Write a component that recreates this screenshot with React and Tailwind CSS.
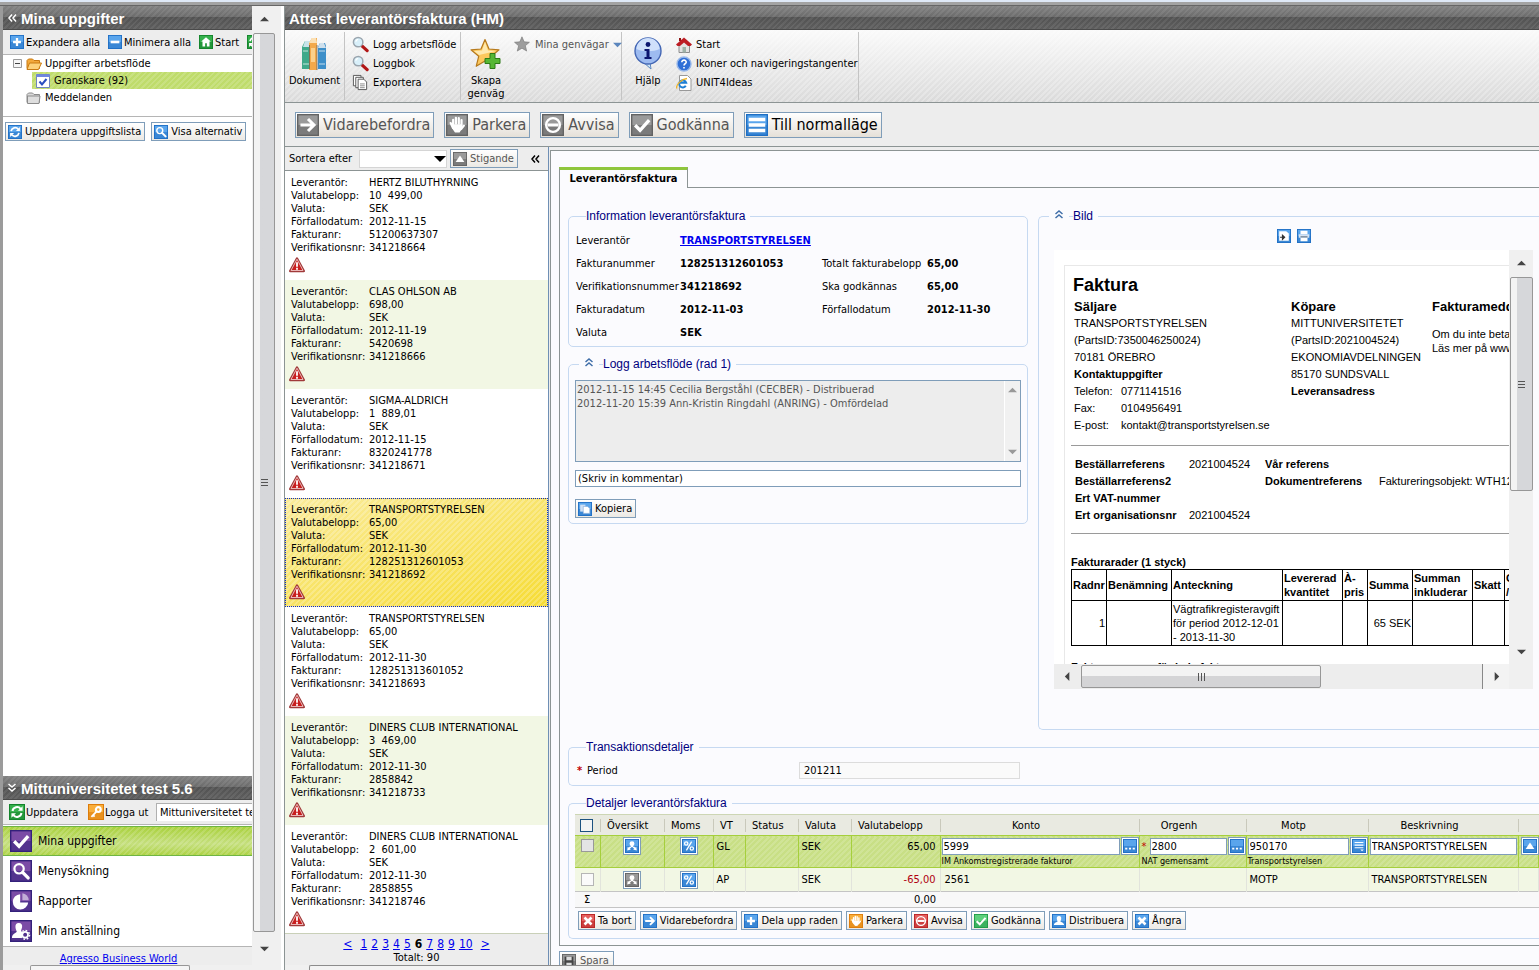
import clsx from 'clsx';

const glyphs = {
    plus: <path d="M8 3.5v9M3.5 8h9" stroke="#fff" strokeWidth="2.6" />,
    minus: <path d="M3 8h10" stroke="#fff" strokeWidth="3" />,
    home: <path d="M8 2.5L2.5 7.5h1.5V13h3v-3.5h2V13h3V7.5h1.5z" fill="#fff" />,
    refresh: (
        <g fill="none" stroke="#fff" strokeWidth="2">
            <path d="M3.5 7a4.7 4.7 0 018.2-2.2M12.5 9a4.7 4.7 0 01-8.2 2.2" />
            <path d="M13.6 2.2v4.6H9zM2.4 13.8V9.2H7z" fill="#fff" stroke="none" />
        </g>
    ),
    search: (
        <g fill="none" stroke="#fff">
            <circle cx="6.6" cy="6.4" r="3.4" strokeWidth="1.6" />
            <path d="M9.2 9l4 4" strokeWidth="2.4" strokeLinecap="round" />
        </g>
    ),
    key: (
        <g fill="none" stroke="#fff">
            <circle cx="10.3" cy="5.6" r="2.4" strokeWidth="2.2" />
            <path d="M8.4 7.6l-5 5.2M5 11l1.6 1.6" strokeWidth="1.8" />
        </g>
    ),
    arrow: <path d="M2.5 8h9M8 3.6L12.4 8 8 12.4" fill="none" stroke="#fff" strokeWidth="2.2" />,
    hand: (
        <g stroke="#fff" strokeWidth="1.6" strokeLinecap="round" fill="#fff">
            <path d="M5.2 8V4.2M7.2 7V2.8M9.3 7V3M11.3 8V4.4M13 8.4l-2 2.6M3.4 6.6L5 10" />
            <path d="M5 8h6.2v2.4L9.6 13H6.8L5 10.4z" strokeWidth="1" />
        </g>
    ),
    stop: (
        <g fill="none" stroke="#fff">
            <circle cx="8" cy="8" r="5" strokeWidth="1.7" />
            <path d="M4 8h8" strokeWidth="2.2" />
        </g>
    ),
    check: <path d="M3 8.2l3.6 3.6L13.2 4.4" fill="none" stroke="#fff" strokeWidth="2.4" />,
    cross: <path d="M4 4l8 8M12 4l-8 8" stroke="#fff" strokeWidth="3" />,
    lines: <path d="M2 4h12M2 8h12M2 12h12" stroke="#fff" strokeWidth="2.4" />,
    up: <path d="M8 4l5 7.5H3z" fill="#fff" />,
    pie: (
        <g fill="#fff">
            <path d="M7.4 3v6h5.8A5.6 5.6 0 117.4 3z" />
            <path d="M9 2.4a5 5 0 014.6 5H9z" opacity=".55" />
        </g>
    ),
    person: <path d="M8 2.4c2 0 2.8 1.5 2.5 3.4-.2 1.3-.8 2-.9 2.9.8.8 3.9 1 4.2 4H2.2c.3-3 3.4-3.2 4.2-4-.1-.9-.7-1.6-.9-2.9C5.2 3.9 6 2.4 8 2.4z" fill="#fff" />,
    personGear: (
        <g>
            <path d="M6.4 2.2c1.9 0 2.7 1.4 2.4 3.1-.2 1.2-.7 1.9-.8 2.7.5.5 1.400.8 2 1.200L8.200 13H1.400c.2-3 2.800-3.400 3.500-4.400-.1-.9-.7-1.700-.9-3C3.700 3.700 4.500 2.200 6.400 2.200z" fill="#fff" />
            <circle cx="11" cy="10.8" r="2.1" fill="none" stroke="#fff" strokeWidth="1.3" />
            <circle cx="11" cy="10.8" r="3.2" fill="none" stroke="#fff" strokeWidth="1.1" strokeDasharray="1.2 1.3" />
        </g>
    ),
    percent: (
        <g fill="none" stroke="#fff" strokeWidth="1.5">
            <circle cx="4.8" cy="5.2" r="1.9" />
            <circle cx="11.2" cy="10.8" r="1.9" />
            <path d="M11 3L5 13" />
        </g>
    ),
    split: (
        <g fill="#fff">
            <circle cx="8" cy="5.4" r="2.8" />
            <path d="M7 7.5h2l.5 2H6.5zM2.5 13l.6-4.2 3.6 3.2zM13.5 13l-.6-4.2L9.3 12z" />
            <path d="M6.5 9L4 11.500M9.500 9l2.500 2.500" stroke="#fff" strokeWidth="1.8" />
        </g>
    ),
    dots: <path d="M2.5 11h2.4M6.8 11h2.4M11.1 11h2.4" stroke="#fff" strokeWidth="2" />,
    menu: (
        <g>
            <path d="M3 4h10M3 7h10M3 10h10" stroke="#fff" strokeWidth="1.2" />
            <path d="M9.5 12h4l-2 2z" fill="#fff" />
        </g>
    ),
    copy: (
        <g>
            <path d="M2.5 3h6v8h-6z" fill="#cfe0f4" />
            <path d="M6 5h5l2.5 2.5V13H6z" fill="#fff" stroke="#7fa6d6" strokeWidth=".7" />
        </g>
    ),
    fit: (
        <g>
            <path d="M2.5 2.5h8L13.500 5v8.500h-11z" fill="#fff" />
            <path d="M3.500 9.500h5M6.200 7L8.800 9.500 6.200 12z" fill="#333" stroke="#333" strokeWidth="1.200" />
        </g>
    ),
    print: (
        <g>
            <path d="M4 2h8v4H4zM4 9.5h8V14H4z" fill="#fff" />
            <path d="M2 6h12v4H2z" fill="#d5e3f3" />
            <path d="M4 9h8" stroke="#456" />
        </g>
    ),
    disk: (
        <g>
            <path d="M3 3h10v10H3z" fill="#444" />
            <path d="M5 3h6v4H5zM5 10h6v3H5z" fill="#ddd" />
        </g>
    ),
};

const tileColors = {
    blue: ['#5aa5ec', '#1f6fc4'],
    green: ['#35b04c', '#14832c'],
    lime: ['#5ed07c', '#1f9a47'],
    orange: ['#f9ae3a', '#dd7c0a'],
    red: ['#e4605f', '#b92324'],
    gray: ['#9a9a9a', '#636363'],
    purple: ['#7b4ba6', '#33207a'],
};

function Tile({ glyph, color = 'blue', className = 'size-[14px]' }) {
    const [top, bottom] = tileColors[color];
    return (
        <svg viewBox="0 0 16 16" className={clsx('shrink-0', className)} aria-hidden="true">
            <path d="M0 0h16v16H0z" fill={bottom} />
            <path d="M1 1h14v7H1z" fill={top} />
            <path d="M1 8h14v7H1z" fill={top} opacity=".45" />
            {glyphs[glyph]}
        </svg>
    );
}

function Chevrons({ dir = 'left', className }) {
    const paths = {
        left: 'M5 1.5L2 5l3 3.500M9 1.500L6 5l3 3.500',
        up: 'M1.5 5L5 2l3.500 3M1.500 9L5 6l3.500 3',
        down: 'M1.5 1L5 4l3.500-3M1.500 5L5 8l3.500-3',
    };
    return (
        <svg viewBox="0 0 10 10" className={clsx('size-[10px] shrink-0', className)} fill="none" stroke="currentColor" strokeWidth="1.5" aria-hidden="true">
            <path d={paths[dir]} />
        </svg>
    );
}

function Caret({ dir, className = 'text-[#444]' }) {
    const paths = { up: 'M0 7l5-5 5 5z', down: 'M0 3l5 5 5-5z', left: 'M7 0L2 5l5 5z', right: 'M3 0l5 5-5 5z' };
    return (
        <svg viewBox="0 0 10 10" className={clsx('size-[9px] shrink-0', className)} fill="currentColor" aria-hidden="true">
            <path d={paths[dir]} />
        </svg>
    );
}

function Warning() {
    return (
        <svg viewBox="0 0 16 16" className="size-[16px]" role="img" aria-label="Varning">
            <path d="M8 1.5L14.800 14H1.200z" fill="#a03a3a" stroke="#a03a3a" strokeWidth="2.400" strokeLinejoin="round" />
            <path d="M8 2.200L14 13.500H2z" fill="#c81e1e" stroke="#eab5b5" strokeWidth="1" strokeLinejoin="round" />
            <path d="M8 5.200v4.600M8 10.800v1.900" stroke="#fff" strokeWidth="1.800" />
        </svg>
    );
}

function Folder({ open }) {
    return (
        <svg viewBox="0 0 16 14" className="h-[14px] w-[16px] shrink-0" aria-hidden="true">
            <path
                d="M1 11.5V3.500L2.500 2h4L8 3.500h5.500v8z"
                fill={open ? '#f3a93a' : '#d9d9d9'}
                stroke={open ? '#c97a12' : '#8b8b8b'}
                strokeLinejoin="round"
            />
            {open ? (
                <path d="M3.500 6H15.500l-3 6.500H1z" fill="#fdd27a" stroke="#c97a12" strokeLinejoin="round" />
            ) : (
                <path d="M1.500 5H14l-1 7.500H1.500z" fill="#dedede" stroke="#8b8b8b" strokeLinejoin="round" />
            )}
        </svg>
    );
}

function MagnifierIcon() {
    return (
        <svg viewBox="0 0 18 18" className="size-[17px] shrink-0" aria-hidden="true">
            <path d="M10.500 10.500l5.500 5" stroke="#b11616" strokeWidth="3.400" strokeLinecap="round" />
            <circle cx="6.500" cy="6.500" r="5" fill="#d9f0fa" stroke="#9aa5ae" strokeWidth="1.600" />
            <path d="M4 6a3 3 0 012.500-2.500" stroke="#fff" strokeWidth="1.400" fill="none" />
        </svg>
    );
}

function PagesIcon() {
    return (
        <svg viewBox="0 0 18 18" className="size-[17px] shrink-0" fill="#fff" stroke="#555" aria-hidden="true">
            <path d="M1.500 1.500h8v11h-8z" />
            <path d="M4 3.500h8v11H4z" />
            <path d="M6.500 5.500h6l3 3v8h-9z" />
            <path d="M8.500 10.500h5M8.500 12.500h5M8.500 14.500h5" stroke="#888" />
        </svg>
    );
}

function BooksIcon() {
    return (
        <svg viewBox="0 0 28 34" className="h-[34px] w-[28px]" aria-hidden="true">
            <path d="M2 10l3-6h5v28H2z" fill="#3fa98a" />
            <path d="M5 4h5v6H3z" fill="#c8e3ea" />
            <path d="M9 6l3-5h5v32H9z" fill="#f3a94b" />
            <path d="M12 1h4l1 5H9z" fill="#fbe0b4" />
            <path d="M11 11h4v14h-4z" fill="#fbd08b" />
            <path d="M18 10l2-4h5l1 3v23h-8z" fill="#3d8fc9" />
            <path d="M20 6h4l2 5h-8z" fill="#cfe0ec" />
            <path d="M3 27h6M19 27h6M19 14h6M3 14h5" stroke="#fff" opacity=".7" />
            <path d="M17 8v25M9.500 8v24" stroke="#555" strokeWidth=".7" />
        </svg>
    );
}

function StarIcon({ gold }) {
    const d = 'M15 1.500l4 9.500 10 .8-7.700 6.500 2.500 10L15 23l-8.800 5.300 2.500-10L1 11.800l10-.8z';
    return (
        <svg viewBox="0 0 32 32" className={gold ? 'size-[32px]' : 'size-[17px]'} aria-hidden="true">
            <path d={d} fill={gold ? '#fcc85d' : '#9d9d9d'} stroke={gold ? '#b5791d' : '#777'} strokeWidth="1.2" strokeLinejoin="round" />
            {gold && <path d="M15 4l3 8.500 8 .5-17 4-5-4 8-.5z" fill="#fee9b0" />}
            {gold && <path d="M20 15.500h5v5h5v5h-5v5h-5v-5h-5v-5h5z" fill="#56b734" stroke="#2d7a16" />}
        </svg>
    );
}

function InfoIcon() {
    return (
        <svg viewBox="0 0 30 34" className="h-[34px] w-[30px]" aria-hidden="true">
            <path d="M10 25l8 7-1-7z" fill="#cfe6f8" stroke="#5b86bd" />
            <circle cx="15" cy="14" r="13" fill="#9dbbf0" stroke="#4467b4" strokeWidth="1.4" />
            <path d="M3.500 12a11.500 11 0 0123 0c-6 3-17 3-23 0z" fill="#cfe0fb" />
            <circle cx="15" cy="7.500" r="2.400" fill="#0c1670" />
            <path d="M11.500 12h5v8h2v2h-7v-2h2v-6h-2z" fill="#0c1670" />
        </svg>
    );
}

function HouseIcon() {
    return (
        <svg viewBox="0 0 16 16" className="size-[16px] shrink-0" aria-hidden="true">
            <path d="M3 8h10.500v7.500H3z" fill="#e3e3e3" stroke="#8d8d8d" />
            <path d="M6.500 10h3.500v5.500H6.500z" fill="#9fb3a8" />
            <path d="M3 1h2v3H3z" fill="#8c1616" />
            <path d="M8 .5l8 7-1.500 1.500H1.500L0 7.500z" fill="#bd1d24" />
            <path d="M8 5.500l4 3.500H4z" fill="#e3e3e3" />
        </svg>
    );
}

function HelpIcon() {
    return (
        <svg viewBox="0 0 16 16" className="size-[16px] shrink-0" aria-hidden="true">
            <circle cx="8" cy="8" r="7" fill="#2f6fd6" stroke="#98b8ea" strokeWidth="1.4" />
            <path d="M5.800 6.300c0-3 4.600-2.700 4.400 0-.1 1.400-2 1.500-2.200 3.200M8 11v1.600" fill="none" stroke="#fff" strokeWidth="1.6" />
        </svg>
    );
}

function BrowserIcon() {
    return (
        <svg viewBox="0 0 16 16" className="size-[16px] shrink-0" aria-hidden="true">
            <path d="M3.500.5h8l3.500 3.500v11.500H3.500z" fill="#fff" stroke="#999" />
            <path d="M9.800 10.800a3.600 3.600 0 11.400-3H3.500" fill="none" stroke="#1f7fd4" strokeWidth="2" />
            <path d="M.8 13.500C-.5 10 5.500 4 11 3.500" fill="none" stroke="#f0b429" strokeWidth="1.3" />
        </svg>
    );
}

function TaskIcon() {
    return (
        <svg viewBox="0 0 14 14" className="size-[14px] shrink-0" aria-hidden="true">
            <path d="M.5.5h13v13H.5z" fill="#fff" stroke="#6f86bd" />
            <path d="M.5.5h13v2.500H.5z" fill="#6f86e0" />
            <path d="M3.500 7.500l2.500 3 4.500-5.500" fill="none" stroke="#2a4fc0" strokeWidth="2" />
        </svg>
    );
}

function TitleBar({ children, chevron }) {
    return (
        <h2 className="flex h-6 shrink-0 items-center gap-1 overflow-hidden border-b border-[#4a4a4a] bg-[image:repeating-linear-gradient(135deg,rgba(255,255,255,.07)_0_2px,transparent_2px_4px),linear-gradient(#828282,#6a6a6a_50%,#525252_50%,#5e5e5e)] pt-px pl-[4px] font-['Liberation_Sans',sans-serif] text-[15px] font-bold whitespace-nowrap text-white">
            {chevron && <Chevrons dir={chevron} />}
            {children}
        </h2>
    );
}

function SmallButton({ glyph, color, muted, children }) {
    return (
        <button
            type="button"
            className={clsx(
                'flex h-[19px] shrink-0 items-center gap-[3px] border border-[#7f9db9] bg-linear-to-b from-white to-[#ece9e4] pr-[3px] pl-[2px] whitespace-nowrap',
                muted && 'text-[#555]'
            )}
        >
            <Tile glyph={glyph} color={color} />
            {children}
        </button>
    );
}

function ActionButton({ glyph, color = 'gray', children }) {
    return (
        <button
            type="button"
            className={clsx(
                'flex h-[26px] items-center gap-1 border border-[#7f9db9] bg-linear-to-b from-white to-[#e5e0d8] pr-[3px] pl-px text-[16px] whitespace-nowrap',
                color === 'gray' ? 'text-[#555]' : 'text-black'
            )}
        >
            <Tile glyph={glyph} color={color} className="size-[22px]" />
            {children}
        </button>
    );
}

function FieldGroup({ title, collapsible, className, children }) {
    return (
        <fieldset className={clsx('min-w-0 rounded-[5px] border border-[#c6d9f1] px-[6px]', className)}>
            <legend className={clsx("flex h-4 items-center pr-[5px] font-['Liberation_Sans',sans-serif] text-[12px] text-[#00007f]", collapsible ? 'ml-[4px]' : 'ml-[11px]')}>
                {collapsible && (
                    <>
                        <Chevrons dir="up" className="mx-[5px] mb-1 text-[#3f6ea8]" />
                        <span className="h-px w-1 bg-[#c6d9f1]" />
                    </>
                )}
                {title}
            </legend>
            {children}
        </fieldset>
    );
}

function ListPane() {
    const invoices = [
        ['HERTZ BILUTHYRNING', '10  499,00', '2012-11-15', '51200637307', '341218664'],
        ['CLAS OHLSON AB', '698,00', '2012-11-19', '5420698', '341218666'],
        ['SIGMA-ALDRICH', '1  889,01', '2012-11-15', '8320241778', '341218671'],
        ['TRANSPORTSTYRELSEN', '65,00', '2012-11-30', '128251312601053', '341218692'],
        ['TRANSPORTSTYRELSEN', '65,00', '2012-11-30', '128251313601052', '341218693'],
        ['DINERS CLUB INTERNATIONAL', '3  469,00', '2012-11-30', '2858842', '341218733'],
        ['DINERS CLUB INTERNATIONAL', '2  601,00', '2012-11-30', '2858855', '341218746'],
    ];
    const labels = ['Leverantör:', 'Valutabelopp:', 'Valuta:', 'Förfallodatum:', 'Fakturanr:', 'Verifikationsnr:'];
    const selected = 3;

    return (
        <section className="flex w-[264px] shrink-0 flex-col border-r border-[#6f8fb5]">
            <div className="flex h-6 shrink-0 items-center border-b border-[#8c9494] bg-[#ededed] pl-1">
                <label htmlFor="sort" className="w-[70px]">Sortera efter</label>
                <div className="relative flex w-[88px] items-center">
                    <select id="sort" className="h-[18px] w-full appearance-none border border-[#d5d5d5] bg-white" />
                    <svg viewBox="0 0 12 6" className="pointer-events-none absolute right-px h-[6px] w-[12px]" aria-hidden="true">
                        <path d="M0 0h12L6 6z" />
                    </svg>
                </div>
                <div className="ml-[3px] flex grow items-center gap-3">
                    <SmallButton glyph="up" color="gray" muted>
                        Stigande
                    </SmallButton>
                    <Chevrons />
                </div>
            </div>

            <ul className="min-h-0 flex-1 overflow-hidden bg-white">
                {invoices.map(([supplier, amount, due, number, voucher], i) => (
                    <li
                        key={voucher}
                        className={clsx(
                            'h-[109px] border border-dotted px-[5px] pt-[4px]',
                            i === selected
                                ? 'border-[#0a2ad0] bg-[image:repeating-linear-gradient(135deg,rgba(255,255,255,.22)_0_2px,transparent_2px_4px),linear-gradient(160deg,#faeb9a,#f6dc35)]'
                                : 'border-transparent',
                            i !== selected && i % 2 === 1 && 'bg-[#f2f7e4]'
                        )}
                    >
                        <dl className="grid grid-cols-[78px_1fr] leading-[13px] whitespace-pre">
                            {[supplier, amount, 'SEK', due, number, voucher].map((value, n) => (
                                <div key={labels[n]} className="contents">
                                    <dt>{labels[n]}</dt>
                                    <dd>{value}</dd>
                                </div>
                            ))}
                        </dl>
                        <div className="-ml-[2px] pt-[3px]">
                            <Warning />
                        </div>
                    </li>
                ))}
            </ul>

            <div className="flex h-8 shrink-0 flex-col items-center border-t border-[#c9d0b8] bg-[#ededed] pt-[3px]">
                <nav className="flex gap-1 text-[12px] leading-[14px] text-[#0000ee]" aria-label="Sidor">
                    <a href="#prev" className="mr-1 underline">&lt;</a>
                    {[1, 2, 3, 4, 5, 6, 7, 8, 9, 10].map((page) =>
                        page === 6 ? (
                            <b key={page} className="text-black">6</b>
                        ) : (
                            <a key={page} href={`#${page}`} className="underline">{page}</a>
                        )
                    )}
                    <a href="#next" className="ml-1 underline">&gt;</a>
                </nav>
                <span className="leading-[13px]">Totalt: 90</span>
            </div>
        </section>
    );
}

function InvoiceDocument() {
    return (
        <div className="min-h-0 min-w-0 flex-1 overflow-hidden bg-white pt-[15px] pl-[10px] font-['Liberation_Sans',sans-serif] whitespace-nowrap">
            <div className="h-full border-t border-l border-[#e8e8e8] pl-[6px]">
                <h1 className="pt-[9px] pl-[2px] text-[18px] leading-[20px] font-bold">Faktura</h1>
                <div className="grid grid-cols-[217px_141px_1fr] pt-[3px] pl-[3px] leading-[17px]">
                    <div>
                        <h3 className="text-[13px] font-bold">Säljare</h3>
                        <p>TRANSPORTSTYRELSEN</p>
                        <p>(PartsID:7350046250024)</p>
                        <p>70181 ÖREBRO</p>
                        <h4 className="font-bold">Kontaktuppgifter</h4>
                        <dl className="grid grid-cols-[47px_1fr]">
                            <dt>Telefon:</dt>
                            <dd>0771141516</dd>
                            <dt>Fax:</dt>
                            <dd>0104956491</dd>
                            <dt>E-post:</dt>
                            <dd>kontakt@transportstyrelsen.se</dd>
                        </dl>
                    </div>
                    <div>
                        <h3 className="text-[13px] font-bold">Köpare</h3>
                        <p>MITTUNIVERSITETET</p>
                        <p>(PartsID:2021004524)</p>
                        <p>EKONOMIAVDELNINGEN</p>
                        <p>85170 SUNDSVALL</p>
                        <h4 className="font-bold">Leveransadress</h4>
                    </div>
                    <div className="min-w-0">
                        <h3 className="text-[13px] font-bold">Fakturameddelande</h3>
                        <p className="pt-3 leading-[14px]">
                            Om du inte betalar i tid
                            <br />
                            Läs mer på www.transportstyrelsen.se
                        </p>
                    </div>
                </div>

                <hr className="mt-[11px] border-[#9a9a9a]" />
                <div className="grid grid-cols-[114px_76px_114px_1fr] pt-[10px] pl-1 leading-[17px]">
                    <b>Beställarreferens</b>
                    <span>2021004524</span>
                    <b>Vår referens</b>
                    <span />
                    <b>Beställarreferens2</b>
                    <span />
                    <b>Dokumentreferens</b>
                    <span>Faktureringsobjekt: WTH120</span>
                    <b className="col-span-4">Ert VAT-nummer</b>
                    <b>Ert organisationsnr</b>
                    <span>2021004524</span>
                </div>
                <hr className="mt-[9px] border-[#9a9a9a]" />

                <h4 className="pt-[21px] leading-[14px] font-bold">Fakturarader (1 styck)</h4>
                <table className="w-[540px] table-fixed border-collapse leading-[14px] [&_td]:border [&_td]:border-black [&_td]:px-px [&_th]:border [&_th]:border-black [&_th]:px-px [&_th]:text-left">
                    <colgroup>
                        <col className="w-[35px]" />
                        <col className="w-[65px]" />
                        <col className="w-[111px]" />
                        <col className="w-[60px]" />
                        <col className="w-[25px]" />
                        <col className="w-[45px]" />
                        <col className="w-[60px]" />
                        <col className="w-[32px]" />
                        <col />
                    </colgroup>
                    <thead>
                        <tr className="h-[31px]">
                            <th>Radnr</th>
                            <th>Benämning</th>
                            <th>Anteckning</th>
                            <th>Levererad<br />kvantitet</th>
                            <th>À-<br />pris</th>
                            <th>Summa</th>
                            <th>Summan<br />inkluderar</th>
                            <th>Skatt</th>
                            <th>Orsak<br />/kod</th>
                        </tr>
                    </thead>
                    <tbody>
                        <tr className="h-[45px]">
                            <td className="text-right">1</td>
                            <td />
                            <td>Vägtrafikregisteravgift<br />för period 2012-12-01<br />- 2013-11-30</td>
                            <td />
                            <td />
                            <td className="text-right">65 SEK</td>
                            <td />
                            <td />
                            <td />
                        </tr>
                    </tbody>
                </table>
                <h4 className="pt-[14px] leading-[14px] font-bold">Fakturasummor för hela fakturan</h4>
            </div>
        </div>
    );
}

function ImagePanel() {
    return (
        <FieldGroup title="Bild" collapsible className="flex flex-1 flex-col rounded-r-none border-r-0 pb-10">
            <div className="flex shrink-0 justify-center gap-[6px] pt-[5px] pb-[7px] pl-[9px]">
                <button type="button" aria-label="Anpassa"><Tile glyph="fit" /></button>
                <button type="button" aria-label="Skriv ut"><Tile glyph="print" /></button>
            </div>
            <div className="flex min-h-0 flex-1 pl-[9px]">
                <div className="flex min-w-0 flex-1 flex-col">
                    <InvoiceDocument />
                    <div className="flex h-[25px] shrink-0 items-center bg-[#ededed]">
                        <div className="flex w-[27px] justify-center"><Caret dir="left" /></div>
                        <div className="flex h-[23px] w-[240px] items-center justify-center gap-[2px] rounded-[2px] border border-[#979797] bg-linear-to-b from-[#f3f3f3] from-50% to-[#d4d4d6] to-50%">
                            <span className="h-2 w-px bg-[#555]" />
                            <span className="h-2 w-px bg-[#555]" />
                            <span className="h-2 w-px bg-[#555]" />
                        </div>
                        <div className="ml-auto flex h-full w-[27px] items-center justify-center border-l border-[#888] bg-[#f3f3f3]"><Caret dir="right" /></div>
                    </div>
                </div>
                <div className="flex w-6 flex-col items-center bg-[#f0f0f0]">
                    <div className="flex h-[27px] items-center"><Caret dir="up" /></div>
                    <div className="flex h-[214px] w-[23px] flex-col items-center justify-center gap-[2px] rounded-[2px] border border-[#979797] bg-linear-to-r from-[#f3f3f3] from-30% to-[#d6d7da] to-30%">
                        <span className="h-px w-[7px] bg-[#555]" />
                        <span className="h-px w-[7px] bg-[#555]" />
                        <span className="h-px w-[7px] bg-[#555]" />
                    </div>
                    <div className="mt-auto mb-[25px] flex h-[25px] items-center"><Caret dir="down" /></div>
                </div>
            </div>
        </FieldGroup>
    );
}

function LookupInput({ label, value, glyph }) {
    return (
        <div className="flex min-w-0 flex-1 items-center gap-px">
            <input aria-label={label} defaultValue={value} className="h-[17px] min-w-0 flex-1 border border-[#7f9db9] bg-white px-px" />
            {glyph && (
                <button type="button" aria-label={`Sök ${label}`} className="shrink-0 border border-[#7f9db9] bg-white p-px">
                    <Tile glyph={glyph} />
                </button>
            )}
        </div>
    );
}

function DetailTable() {
    const head = ['Översikt', 'Moms', 'VT', 'Status', 'Valuta', 'Valutabelopp', 'Konto', 'Orgenh', 'Motp', 'Beskrivning', ''];
    const iconButton = 'inline-block border border-[#7f9db9] bg-white p-px align-middle';

    return (
        <table className="mt-[3px] w-full table-fixed border-collapse">
            <colgroup>
                <col className="w-[25px]" />
                <col className="w-[64px]" />
                <col className="w-[49px]" />
                <col className="w-[32px]" />
                <col className="w-[53px]" />
                <col className="w-[53px]" />
                <col className="w-[89px]" />
                <col className="w-[199px]" />
                <col className="w-[107px]" />
                <col className="w-[122px]" />
                <col className="w-[150px]" />
                <col />
            </colgroup>
            <thead>
                <tr className="h-[21px] border-t border-[#cdd6b4] bg-[#e9eae1]">
                    <th>
                        <input type="checkbox" aria-label="Markera alla" className="ml-[5px] block size-[13px] appearance-none border border-[#1c5180] bg-[#f3f3f3]" />
                    </th>
                    {head.map((name, i) => (
                        <th key={i} className="p-0 font-normal">
                            <div className={clsx('flex h-[13px] items-center border-l border-[#c9c9bb] whitespace-nowrap', i < 6 ? 'pl-[6px]' : 'justify-center pr-7')}>{name}</div>
                        </th>
                    ))}
                </tr>
            </thead>
            <tbody>
                <tr className="h-8 border-y border-[#a5cf3c] bg-[#c8df85] bg-[image:repeating-linear-gradient(135deg,rgba(255,255,255,.15)_0_2px,transparent_2px_4px)] align-top [&>td]:border-r [&>td]:border-[#a5cf3c] [&>td]:pt-px">
                    <td>
                        <input type="checkbox" aria-label="Markera rad GL" className="mt-[2px] ml-[6px] block size-[13px] appearance-none border border-[#999] bg-[#e4e4e4]" />
                    </td>
                    <td className="text-center"><button type="button" aria-label="Översikt" className={iconButton}><Tile glyph="split" /></button></td>
                    <td className="text-center"><button type="button" aria-label="Moms" className={iconButton}><Tile glyph="percent" /></button></td>
                    <td className="pl-[3px] leading-[19px]">GL</td>
                    <td />
                    <td className="pl-[3px] leading-[19px]">SEK</td>
                    <td className="pr-1 text-right leading-[19px]">65,00</td>
                    <td className="pl-px">
                        <LookupInput label="Konto" value="5999" glyph="dots" />
                        <p className="text-[9px] leading-[12px] whitespace-nowrap">IM Ankomstregistrerade fakturor</p>
                    </td>
                    <td className="pl-[2px]">
                        <div className="flex items-center">
                            <span className="w-2 text-[#c00000]">*</span>
                            <LookupInput label="Orgenh" value="2800" glyph="dots" />
                        </div>
                        <p className="text-[9px] leading-[12px] whitespace-nowrap">NAT gemensamt</p>
                    </td>
                    <td className="pl-px">
                        <LookupInput label="Motp" value="950170" glyph="menu" />
                        <p className="text-[9px] leading-[12px] whitespace-nowrap">Transportstyrelsen</p>
                    </td>
                    <td className="px-px">
                        <div className="flex h-[18px] items-center"><LookupInput label="Beskrivning" value="TRANSPORTSTYRELSEN" /></div>
                    </td>
                    <td className="pl-[2px]"><button type="button" aria-label="Upp" className={iconButton}><Tile glyph="up" /></button></td>
                </tr>
                <tr className="h-6 border-b border-[#c4c4c4] bg-[#f2f7e4] [&>td]:border-r [&>td]:border-[#e2e4dc]">
                    <td>
                        <input type="checkbox" aria-label="Markera rad AP" className="ml-[6px] block size-[13px] appearance-none border border-[#b5b5b5] bg-[#fafafa]" />
                    </td>
                    <td className="text-center"><button type="button" aria-label="Översikt" className={iconButton}><Tile glyph="split" color="gray" /></button></td>
                    <td className="text-center"><button type="button" aria-label="Moms" className={iconButton}><Tile glyph="percent" /></button></td>
                    <td className="pl-[3px]">AP</td>
                    <td />
                    <td className="pl-[3px]">SEK</td>
                    <td className="pr-1 text-right text-[#b00010]">-65,00</td>
                    <td className="pl-1">2561</td>
                    <td />
                    <td className="pl-[3px]">MOTP</td>
                    <td className="pl-[3px]">TRANSPORTSTYRELSEN</td>
                    <td />
                </tr>
                <tr className="h-4 border-b border-[#c4c4c4] bg-[#f8f8f8]">
                    <td className="pl-[9px] leading-[15px]">Σ</td>
                    <td colSpan={5} />
                    <td className="pr-1 text-right leading-[15px]">0,00</td>
                    <td colSpan={5} />
                </tr>
            </tbody>
        </table>
    );
}

function DetailPane() {
    const info = [
        ['Fakturanummer', '128251312601053', 'Totalt fakturabelopp', '65,00'],
        ['Verifikationsnummer', '341218692', 'Ska godkännas', '65,00'],
        ['Fakturadatum', '2012-11-03', 'Förfallodatum', '2012-11-30'],
        ['Valuta', 'SEK', '', ''],
    ];

    return (
        <section className="flex min-w-0 flex-1 flex-col overflow-hidden bg-[#ededed] pt-[3px] pl-px">
            <div className="flex min-h-0 flex-1 flex-col border-t border-l border-[#8c9494] bg-[#fbfbfe] pt-4 pl-2">
                <div className="flex shrink-0">
                    <button type="button" className="h-[21px] w-[129px] border-x border-t-3 border-x-[#8c9494] border-t-[#8fc63d] pb-[2px] text-[11px] font-bold whitespace-nowrap">
                        Leverantörsfaktura
                    </button>
                    <div className="flex-1 border-b border-[#8c9494]" />
                </div>

                <div className="flex min-h-0 flex-1 flex-col border-b border-l border-[#8c9494] pb-[6px] pl-2">
                    <div className="flex min-h-0 flex-1 gap-[10px] pt-5">
                        <div className="w-[460px] shrink-0">
                            <FieldGroup title="Information leverantörsfaktura" className="pb-[2px]">
                                <dl className="grid grid-cols-[104px_142px_105px_1fr] pt-[5px] pl-px leading-[23px] whitespace-nowrap">
                                    <dt>Leverantör</dt>
                                    <dd className="col-span-3 font-bold">
                                        <a href="#supplier" className="text-[#0000ee] underline">TRANSPORTSTYRELSEN</a>
                                    </dd>
                                    {info.map(([label, value, label2, value2]) => (
                                        <div key={label} className="contents">
                                            <dt>{label}</dt>
                                            <dd className="font-bold">{value}</dd>
                                            <dt>{label2}</dt>
                                            <dd className="font-bold">{value2}</dd>
                                        </div>
                                    ))}
                                </dl>
                            </FieldGroup>

                            <FieldGroup title="Logg arbetsflöde (rad 1)" collapsible className="mt-[9px] pb-[5px]">
                                <div className="mt-2 flex h-[82px] border border-[#7f9db9] bg-[#ededed]">
                                    <textarea
                                        readOnly
                                        aria-label="Logg arbetsflöde"
                                        className="flex-1 resize-none overflow-hidden px-px pt-[2px] leading-[14px] text-[#555] outline-none"
                                        defaultValue={'2012-11-15 14:45 Cecilia Bergståhl (CECBER) - Distribuerad\n2012-11-20 15:39 Ann-Kristin Ringdahl (ANRING) - Omfördelad'}
                                    />
                                    <div className="flex w-4 flex-col items-center justify-between border-l border-white bg-[#f1f1f1] py-[5px]">
                                        <Caret dir="up" className="text-[#999]" />
                                        <Caret dir="down" className="text-[#999]" />
                                    </div>
                                </div>
                                <input aria-label="Kommentar" defaultValue="(Skriv in kommentar)" className="mt-2 block h-[17px] w-full border border-[#7f9db9] bg-white px-[2px]" />
                                <div className="mt-3 flex">
                                    <SmallButton glyph="copy">Kopiera</SmallButton>
                                </div>
                            </FieldGroup>
                        </div>

                        <ImagePanel />
                    </div>

                    <FieldGroup title="Transaktionsdetaljer" className="mt-[9px] shrink-0 rounded-r-none border-r-0 pb-[6px]">
                        <div className="flex items-center pt-[7px] pl-[2px]">
                            <span className="w-[10px] font-bold text-[#c00000]">*</span>
                            <label htmlFor="period" className="w-[212px]">Period</label>
                            <input id="period" defaultValue="201211" className="h-[17px] w-[221px] border border-[#dcdcdc] bg-[#fafafa] px-1" />
                        </div>
                    </FieldGroup>

                    <FieldGroup title="Detaljer leverantörsfaktura" className="mt-[9px] shrink-0 rounded-r-none border-r-0 pr-0 pb-2">
                        <DetailTable />
                        <div className="mt-[3px] flex gap-1 pl-[3px]">
                            <SmallButton glyph="cross" color="red">Ta bort</SmallButton>
                            <SmallButton glyph="arrow">Vidarebefordra</SmallButton>
                            <SmallButton glyph="plus">Dela upp raden</SmallButton>
                            <SmallButton glyph="hand" color="orange">Parkera</SmallButton>
                            <SmallButton glyph="stop" color="red">Avvisa</SmallButton>
                            <SmallButton glyph="check" color="lime">Godkänna</SmallButton>
                            <SmallButton glyph="person">Distribuera</SmallButton>
                            <SmallButton glyph="cross">Ångra</SmallButton>
                        </div>
                    </FieldGroup>
                </div>

                <div className="flex h-[19px] shrink-0 items-start overflow-hidden pt-[5px]">
                    <SmallButton glyph="disk" color="gray" muted>
                        <span className="px-px">Spara</span>
                    </SmallButton>
                </div>
            </div>
        </section>
    );
}

function Sidebar() {
    const nav = [
        ['check', 'Mina uppgifter'],
        ['search', 'Menysökning'],
        ['pie', 'Rapporter'],
        ['personGear', 'Min anställning'],
    ];

    return (
        <aside className="flex w-[284px] shrink-0 border-r-3 border-l-3 border-r-white border-l-[#9b9b9b]">
            <div className="flex min-w-0 flex-1 flex-col bg-[#f0f0f0]">
                <div className="flex min-h-0 flex-1">
                    <div className="flex min-w-0 flex-1 flex-col bg-white">
                        <TitleBar chevron="left">Mina uppgifter</TitleBar>
                        <div className="flex h-[25px] shrink-0 items-center gap-2 overflow-hidden border-b border-[#b5b5b5] bg-[#ededed] pl-[7px] whitespace-nowrap">
                            <button type="button" className="flex shrink-0 items-center gap-[2px]"><Tile glyph="plus" />Expandera alla</button>
                            <button type="button" className="flex shrink-0 items-center gap-[2px]"><Tile glyph="minus" />Minimera alla</button>
                            <button type="button" className="flex shrink-0 items-center gap-[2px]"><Tile glyph="home" color="green" />Start</button>
                            <button type="button" aria-label="Uppdatera" className="shrink-0"><Tile glyph="refresh" color="green" /></button>
                        </div>

                        <ul className="shrink-0 border-b border-[#b5b5b5] pb-[10px] leading-[17px]">
                            <li className="flex items-center gap-[3px] pl-[10px]">
                                <svg viewBox="0 0 9 9" className="mr-px size-[9px]" aria-hidden="true">
                                    <path d="M.5.5h8v8h-8z" fill="#f5f5f5" stroke="#999" />
                                    <path d="M2 4.500h5" stroke="#444" />
                                </svg>
                                <Folder open />
                                Uppgifter arbetsflöde
                            </li>
                            <li className="ml-[29px] flex items-center gap-1 bg-[#bfdc6b] bg-[image:repeating-linear-gradient(135deg,rgba(255,255,255,.15)_0_2px,transparent_2px_4px)] pl-1">
                                <TaskIcon />
                                Granskare (92)
                            </li>
                            <li className="flex items-center gap-[3px] pl-[23px]">
                                <Folder />
                                Meddelanden
                            </li>
                        </ul>
                        <div className="flex gap-[6px] pt-[5px] pl-[2px]">
                            <SmallButton glyph="refresh">Uppdatera uppgiftslista</SmallButton>
                            <SmallButton glyph="search">Visa alternativ</SmallButton>
                        </div>

                        <div className="mt-auto">
                            <TitleBar chevron="down">Mittuniversitetet test 5.6</TitleBar>
                            <div className="flex h-[25px] items-center overflow-hidden border-b border-[#b5b5b5] bg-[#ededed] pl-[6px] whitespace-nowrap">
                                <button type="button" className="flex w-[79px] shrink-0 items-center gap-px"><Tile glyph="refresh" color="green" className="size-4" />Uppdatera</button>
                                <button type="button" className="flex w-[68px] shrink-0 items-center gap-px"><Tile glyph="key" color="orange" className="size-4" />Logga ut</button>
                                <input aria-label="Klient" defaultValue="Mittuniversitetet test 5.6" className="h-[18px] min-w-0 flex-1 border-t border-l border-[#b0b0b0] bg-white pl-[3px]" />
                            </div>
                            <ul className="pt-px text-[12px]">
                                {nav.map(([glyph, name], i) => (
                                    <li key={name}>
                                        <a
                                            href={`#${glyph}`}
                                            className={clsx(
                                                'flex h-[30px] items-center gap-[6px] pl-[7px]',
                                                i === 0 && 'border-y border-[#6fb544] bg-[image:repeating-linear-gradient(135deg,rgba(255,255,255,.15)_0_2px,transparent_2px_4px),linear-gradient(#a9d13c,#c5df7e_60%,#add344)]'
                                            )}
                                        >
                                            <Tile glyph={glyph} color="purple" className="size-[22px]" />
                                            {name}
                                        </a>
                                    </li>
                                ))}
                            </ul>
                            <div className="h-[19px] border-t border-[#b5b5b5] bg-[#ededed] pt-[5px] pr-[18px] text-center">
                                <a href="#abw" className="text-[#0000ee] underline">Agresso Business World</a>
                            </div>
                        </div>
                    </div>
                    <div className="mr-[5px] flex w-6 shrink-0 flex-col items-center bg-[#f0f0f0]">
                        <div className="flex h-[27px] items-center"><Caret dir="up" /></div>
                        <div className="flex w-[22px] flex-1 flex-col items-center justify-center gap-[2px] rounded-[2px] border border-[#979797] bg-linear-to-r from-[#f3f3f3] from-30% to-[#d6d7da] to-30%">
                            <span className="h-px w-[7px] bg-[#555]" />
                            <span className="h-px w-[7px] bg-[#555]" />
                            <span className="h-px w-[7px] bg-[#555]" />
                        </div>
                        <div className="flex h-[33px] items-center"><Caret dir="down" /></div>
                    </div>
                </div>
                <div className="h-[5px] shrink-0 pl-[27px]">
                    <div className="h-full w-[160px] rounded-t-[2px] border border-b-0 border-[#979797] bg-[#f5f5f5]" />
                </div>
            </div>
        </aside>
    );
}

function Ribbon() {
    const group = 'flex h-full shrink-0 border-r border-[#c4c4c4] pt-[3px]';
    const link = 'flex h-[19px] items-center gap-1 whitespace-nowrap';

    return (
        <div className="flex h-[73px] shrink-0 border-b border-[#8c9494] bg-[#ededed] bg-[image:repeating-linear-gradient(135deg,rgba(255,255,255,.25)_0_2px,transparent_2px_4px),linear-gradient(#fafafa,#dadada)] py-[2px]">
            <div className={clsx(group, 'w-[60px] justify-center')}>
                <button type="button" className="flex flex-col items-center self-start pt-[2px]">
                    <BooksIcon />
                    <span className="mt-[3px] leading-[13px]">Dokument</span>
                </button>
            </div>
            <div className={clsx(group, 'w-[116px] flex-col pl-[7px]')}>
                <a href="#logg" className={link}><MagnifierIcon />Logg arbetsflöde</a>
                <a href="#loggbok" className={link}><MagnifierIcon />Loggbok</a>
                <a href="#export" className={link}><PagesIcon />Exportera</a>
            </div>
            <div className={clsx(group, 'w-[161px] pl-[7px]')}>
                <button type="button" className="flex w-[36px] flex-col items-center self-start pt-[3px]">
                    <StarIcon gold />
                    <span className="mt-1 text-center leading-[13px]">Skapa<br />genväg</span>
                </button>
                <button type="button" className="ml-[10px] flex h-[19px] items-center gap-1 whitespace-nowrap text-[#555]">
                    <StarIcon />
                    Mina genvägar
                    <Caret dir="down" className="size-[5px] text-[#5b86bd]" />
                </button>
            </div>
            <div className={clsx(group, 'w-[237px] pl-[10px]')}>
                <button type="button" className="flex w-[32px] flex-col items-center self-start pt-[2px]">
                    <InfoIcon />
                    <span className="mt-[3px] leading-[13px]">Hjälp</span>
                </button>
                <div className="ml-3">
                    <a href="#start" className={link}><HouseIcon />Start</a>
                    <a href="#ikoner" className={link}><HelpIcon />Ikoner och navigeringstangenter</a>
                    <a href="#ideas" className={link}><BrowserIcon />UNIT4Ideas</a>
                </div>
            </div>
        </div>
    );
}

export default function App() {
    return (
        <div className="flex h-screen flex-col overflow-hidden bg-white font-['DejaVu_Sans_Condensed','Noto_Sans',sans-serif] text-[11px] leading-[13px] text-black">
            <div className="h-[6px] shrink-0 border-t-2 border-b border-t-[#dfe9f7] border-b-[#666] bg-[#a3a3a3]" />
            <div className="flex min-h-0 flex-1">
                <Sidebar />
                <main className="flex min-w-0 flex-1 flex-col border-l border-[#8c9494]">
                    <TitleBar>Attest leverantörsfaktura (HM)</TitleBar>
                    <Ribbon />
                    <div className="flex h-11 shrink-0 items-center gap-[10px] border-b border-[#8c9494] bg-[#ededed] pl-[10px]">
                        <ActionButton glyph="arrow">Vidarebefordra</ActionButton>
                        <ActionButton glyph="hand">Parkera</ActionButton>
                        <ActionButton glyph="stop">Avvisa</ActionButton>
                        <ActionButton glyph="check">Godkänna</ActionButton>
                        <ActionButton glyph="lines" color="blue">Till normalläge</ActionButton>
                    </div>
                    <div className="flex min-h-0 flex-1">
                        <ListPane />
                        <DetailPane />
                    </div>
                    <div className="h-[5px] shrink-0 bg-[#f0f0f0] pl-6">
                        <div className="h-full rounded-tl-[2px] border-t border-l border-[#8c8c8c] bg-[#f3f3f3]" />
                    </div>
                </main>
            </div>
        </div>
    );
}
